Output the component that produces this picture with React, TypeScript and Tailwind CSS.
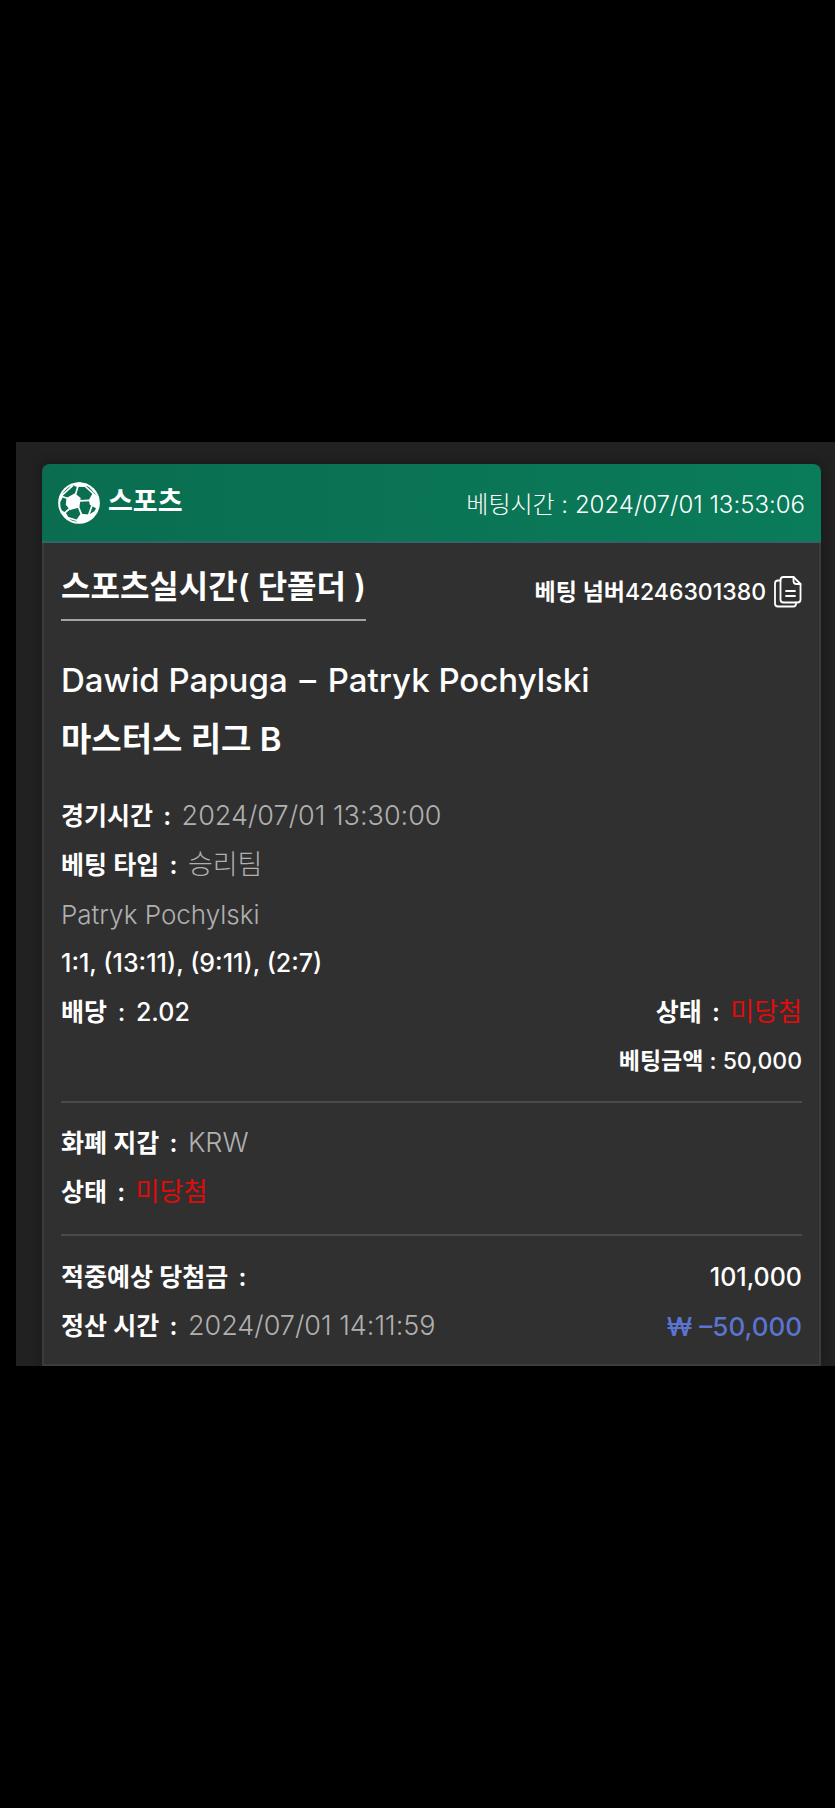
import React from 'react';

interface FieldProps {
  label: string;
  value?: string;
  valueClass?: string;
}

const SoccerIcon: React.FC = () => (
  <svg className="w-[42px] h-[42px] shrink-0" viewBox="0 0 124 124" fill="none" aria-hidden="true">
    <circle cx="62" cy="62" r="58.500" stroke="white" strokeWidth="6" />
    <path d="M25 47L50 33L67 47L63 75L36 83L23 67Z" fill="white" />
    <path d="M40 7L62 1L88 6L77 15L53 14Z" fill="white" />
    <path d="M103 32L120 43L122 68L113 78L94 67L91 53Z" fill="white" />
    <path d="M59 105L67 94L92 96L107 86L109 96L90 116L64 122L52 115Z" fill="white" />
    <path d="M3 44L12 34L14 46L6 60Z" fill="white" />
    <path d="M12 84L24 92L36 114L24 107L11 93Z" fill="white" />
    <g stroke="white" strokeWidth="5">
      <path d="M52 36L59 12" />
      <path d="M65 56L94 54" />
      <path d="M60 73L70 97" />
      <path d="M34 79L19 92" />
      <path d="M27 48L10 42" />
      <path d="M78 11L106 36" />
      <path d="M101 68L90 99" />
      <path d="M118 73L104 97" />
      <path d="M28 105L62 115" />
      <path d="M11 40L44 10" />
      <path d="M91 11L112 33" />
    </g>
  </svg>
);

const CopyIcon: React.FC = () => (
  <svg
    className="w-7 h-8"
    viewBox="0 0 28 32"
    fill="none"
    stroke="white"
    strokeWidth="1.800"
    strokeLinejoin="round"
    strokeLinecap="round"
    aria-hidden="true"
  >
    <path d="M9.500 1H19.500L26.500 8V23.500Q26.500 26.500 23.500 26.500H9.500Q6.500 26.500 6.500 23.500V4Q6.500 1 9.500 1Z" />
    <path d="M19.500 1V5Q19.500 8 22.500 8H26.500" />
    <path d="M6.500 4.500H4Q1 4.500 1 7.500V27.500Q1 30.500 4 30.500H19.500Q22 30.500 22 27.500V26.500" />
    <path d="M12 15H21M12 20H21" />
  </svg>
);

const Colon: React.FC = () => <span className="mx-1"> : </span>;

const Field: React.FC<FieldProps> = ({ label, value, valueClass = 'text-[27px] font-light text-[#b0b0b0]' }) => (
  <p>
    <span className="leading-none font-semibold">
      {label}
      <Colon />
    </span>
    {value && <span className={`leading-none ${valueClass}`}>{value}</span>}
  </p>
);

const App: React.FC = () => {
  return (
    <div className="min-h-screen bg-black flex flex-col justify-center pl-4 font-[Inter,'Noto_Sans_CJK_KR',sans-serif] text-white">
      <main className="bg-[#212121] pt-[22px] pl-[26px] pr-[14px]">
        <article className="shadow-[0_0_10px_rgba(0,0,0,0.3)]">
          <header className="flex items-center justify-between h-[79px] px-4 rounded-t-lg border-b-2 border-[#2f6566] bg-linear-to-r from-[#0a6d50] to-[#0a7c5a]">
            <div className="flex items-center gap-2">
              <SoccerIcon />
              <h1 className="text-[27px] font-semibold">스포츠</h1>
            </div>
            <p className="pt-1 text-[24px] font-light">베팅시간 : 2024/07/01 13:53:06</p>
          </header>

          <div className="bg-[#303030] border-2 border-t-0 border-[#3b3b3e] px-[17px] pt-[20px] pb-[13px] text-[25px] leading-[49px] font-medium">
            <section className="flex justify-between items-center">
              <h2 className="text-[32px] leading-[48px] pb-2 font-semibold border-b-2 border-[#a3a3a3]">스포츠실시간( 단폴더 )</h2>
              <div className="flex items-center gap-2 text-[23px]">
                <span>
                  <span className="font-semibold">베팅 넘버</span>4246301380
                </span>
                <button type="button" aria-label="복사">
                  <CopyIcon />
                </button>
              </div>
            </section>

            <section className="pt-[30px] pb-[23px] text-[33px] leading-[59px]">
              <p>
                Dawid Papuga<span className="mx-[3px]"> – </span>Patryk Pochylski
              </p>
              <p className="font-semibold">마스터스 리그 B</p>
            </section>

            <section className="pb-[15px] border-b-2 border-[#4a4a4a]">
              <Field label="경기시간" value="2024/07/01 13:30:00" />
              <Field label="베팅 타입" value="승리팀" />
              <p className="text-[26px] font-light text-[#b0b0b0]">Patryk Pochylski</p>
              <p>1:1, (13:11), (9:11), (2:7)</p>
              <div className="flex justify-between">
                <p>
                  <span className="font-semibold">배당</span>
                  <Colon />
                  2.02
                </p>
                <Field label="상태" value="미당첨" valueClass="text-[26px] font-normal text-[#e00b0b]" />
              </div>
              <p className="text-right text-[23px]">
                <span className="font-semibold">베팅금액</span> : 50,000
              </p>
            </section>

            <section className="pt-[16px] pb-[17px] border-b-2 border-[#4a4a4a]">
              <Field label="화폐 지갑" value="KRW" />
              <Field label="상태" value="미당첨" valueClass="text-[26px] font-normal text-[#e00b0b]" />
            </section>

            <section className="pt-[17px]">
              <div className="flex justify-between">
                <Field label="적중예상 당첨금" />
                <p>101,000</p>
              </div>
              <div className="flex justify-between">
                <Field label="정산 시간" value="2024/07/01 14:11:59" />
                <p className="text-[26px] text-[#5b74cf]">₩ –50,000</p>
              </div>
            </section>
          </div>
        </article>
      </main>
    </div>
  );
};

export default App;
